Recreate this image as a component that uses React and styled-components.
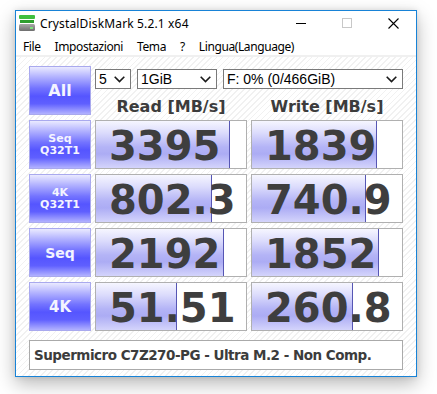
import React from "react";
import styled, { createGlobalStyle } from "styled-components";

const Global = createGlobalStyle`
  html, body { margin: 0; padding: 0; background: #ffffff; }
  body { width: 437px; height: 394px; overflow: hidden; }
`;

const Page = styled.div`
  padding: 10px 0 0 15px;
`;

const Window = styled.div`
  width: 400px;
  height: 365px;
  border: 1px solid #1883d7;
  background: #ffffff;
  box-shadow: 0 7px 18px rgba(0, 0, 0, 0.28), 0 0 6px rgba(0, 0, 0, 0.1);
  display: flex;
  flex-direction: column;
`;

const TitleBar = styled.div`
  height: 24px;
  display: flex;
  align-items: center;
  padding-left: 3px;
  font-family: "Noto Sans", "Open Sans", sans-serif;
  font-size: 12px;
  color: #000;
`;

const TitleText = styled.span`
  margin-left: 5px;
  flex: 1;
  letter-spacing: 0.15px;
`;

const Controls = styled.div`
  display: flex;
  height: 24px;
`;

const CtrlButton = styled.div`
  width: 46px;
  height: 24px;
  display: flex;
  align-items: center;
  justify-content: center;
`;

const MenuBar = styled.div`
  height: 18px;
  padding-top: 2px;
  display: flex;
  align-items: center;
  font-family: "Noto Sans", "Open Sans", sans-serif;
  font-size: 12px;
  color: #000;
  border-bottom: 2px solid #f0f0f0;
`;

const MenuItem = styled.span`
  padding: 0 7px;
  letter-spacing: -0.4px;
`;

const Content = styled.div`
  flex: 1;
  padding: 9px 13px 0 13px;
  background: repeating-linear-gradient(
    135deg,
    #ffffff 0px,
    #ffffff 3px,
    #f1f1f1 3px,
    #f1f1f1 4.2px
  );
`;

const Grid = styled.div`
  display: grid;
  grid-template-columns: 62px 152px 152px;
  grid-auto-rows: 49px;
  column-gap: 4px;
  row-gap: 5px;
`;

const LabelButton = styled.div`
  box-sizing: border-box;
  border: 1px solid #a9a9ee;
  background: linear-gradient(
    to bottom,
    #eaeaff 0%,
    #b0b0ff 22%,
    #7474ff 45%,
    #5555ff 62%,
    #5f5fff 78%,
    #b2b2ff 100%
  );
  display: flex;
  flex-direction: column;
  align-items: center;
  justify-content: center;
  font-family: "DejaVu Sans", Verdana, sans-serif;
  font-weight: bold;
  color: #f4f4ff;
  font-size: ${(p) => p.$size}px;
  line-height: ${(p) => (p.$size > 12 ? 18 : 12)}px;
  text-align: center;
`;

const TopArea = styled.div`
  grid-column: 2 / 4;
  display: flex;
  flex-direction: column;
`;

const SelectRow = styled.div`
  margin-top: 3px;
  display: flex;
  gap: 6px;
`;

const Select = styled.div`
  box-sizing: border-box;
  width: ${(p) => p.$w}px;
  height: 20px;
  border: 1px solid #7a7a7a;
  background: #ffffff;
  display: flex;
  align-items: center;
  padding: 0 5px 0 3px;
  font-family: "Liberation Sans", Arial, sans-serif;
  font-size: 14px;
  color: #000;
`;

const SelectText = styled.span`
  flex: 1;
  white-space: nowrap;
`;

const HeaderRow = styled.div`
  margin-top: 8px;
  display: grid;
  grid-template-columns: 152px 152px;
  column-gap: 4px;
`;

const Header = styled.div`
  text-align: center;
  font-family: "DejaVu Sans", Verdana, sans-serif;
  font-weight: bold;
  font-size: 16px;
  line-height: 19px;
  color: #3c3c3c;
`;

const ValueBox = styled.div`
  box-sizing: border-box;
  border: 1px solid #b0b0b0;
  background:
    linear-gradient(#5656b4, #5656b4) no-repeat,
    linear-gradient(
        to bottom,
        #f6f6ff 0%,
        #dcdcfc 25%,
        #b4b4f6 55%,
        #acacf4 70%,
        #d4d4fb 100%
      )
      no-repeat,
    #ffffff;
  font-family: "DejaVu Sans", Verdana, sans-serif;
  font-weight: bold;
  font-size: 40px;
  color: #3e3e3e;
  padding-left: 13px;
  overflow: hidden;
  white-space: nowrap;
`;

const ValueText = styled.div`
  line-height: 46px;
  margin-top: 2px;
`;

const Comment = styled.div`
  box-sizing: border-box;
  margin-top: 9px;
  height: 30px;
  border: 1px solid #aaaaaa;
  background: #ffffff;
  display: flex;
  align-items: center;
  padding-left: 4px;
  font-family: "DejaVu Sans", Verdana, sans-serif;
  font-weight: bold;
  font-size: 13.5px;
  letter-spacing: -0.5px;
  color: #3c3c3c;
  white-space: nowrap;
`;

const AppIcon = () => (
  <svg width="16" height="17" viewBox="0 0 16 17">
    <defs>
      <linearGradient id="gb" x1="0" y1="0" x2="0" y2="1">
        <stop offset="0" stopColor="#a8a8a8" />
        <stop offset="1" stopColor="#6e6e6e" />
      </linearGradient>
    </defs>
    <rect x="0" y="0" width="16" height="4" rx="1" fill="#3fbf3f" />
    <rect x="1" y="5" width="14" height="3" fill="#2e9e2e" />
    <rect x="0" y="9" width="16" height="7" rx="1.5" fill="url(#gb)" />
    <rect x="11" y="12" width="3" height="2" fill="#7ee07e" />
  </svg>
);

const Chevron = () => (
  <svg width="11" height="7" viewBox="0 0 11 7">
    <path d="M0.7 0.7 L5.5 5.5 L10.3 0.7" fill="none" stroke="#1a1a1a" strokeWidth="1.6" />
  </svg>
);

const rows = [
  { l: ["Seq", "Q32T1"], size: 11, read: "3395", rp: 89, write: "1839", wp: 83.5 },
  { l: ["4K", "Q32T1"], size: 11, read: "802.3", rp: 77, write: "740.9", wp: 76 },
  { l: ["Seq"], size: 14, read: "2192", rp: 85.5, write: "1852", wp: 84.5 },
  { l: ["4K"], size: 15, read: "51.51", rp: 53.5, write: "260.8", wp: 67 },
];

const barStyle = (pct) => ({
  backgroundPosition: `${pct}% 0, 0 0, 0 0`,
  backgroundSize: `1px 100%, ${pct}% 100%, auto`,
});

export default function App() {
  return (
    <>
      <Global />
      <Page>
        <Window>
          <TitleBar>
            <AppIcon />
            <TitleText>CrystalDiskMark 5.2.1 x64</TitleText>
            <Controls>
              <CtrlButton>
                <svg width="10" height="10" viewBox="0 0 10 10">
                  <path d="M0 5.5 H10" stroke="#000" strokeWidth="1" />
                </svg>
              </CtrlButton>
              <CtrlButton>
                <svg width="10" height="10" viewBox="0 0 10 10">
                  <rect x="0.5" y="0.5" width="9" height="9" fill="none" stroke="#c8c8c8" strokeWidth="1" />
                </svg>
              </CtrlButton>
              <CtrlButton>
                <svg width="11" height="11" viewBox="0 0 11 11">
                  <path d="M0.5 0.5 L10.5 10.5 M10.5 0.5 L0.5 10.5" stroke="#000" strokeWidth="1.1" />
                </svg>
              </CtrlButton>
            </Controls>
          </TitleBar>
          <MenuBar>
            <MenuItem>File</MenuItem>
            <MenuItem>Impostazioni</MenuItem>
            <MenuItem>Tema</MenuItem>
            <MenuItem>?</MenuItem>
            <MenuItem>Lingua(Language)</MenuItem>
          </MenuBar>
          <Content>
            <Grid>
              <LabelButton $size={16}>All</LabelButton>
              <TopArea>
                <SelectRow>
                  <Select $w={36}>
                    <SelectText>5</SelectText>
                    <Chevron />
                  </Select>
                  <Select $w={80}>
                    <SelectText>1GiB</SelectText>
                    <Chevron />
                  </Select>
                  <Select $w={180}>
                    <SelectText>F: 0% (0/466GiB)</SelectText>
                    <Chevron />
                  </Select>
                </SelectRow>
                <HeaderRow>
                  <Header>Read [MB/s]</Header>
                  <Header>Write [MB/s]</Header>
                </HeaderRow>
              </TopArea>
              {rows.map((r, i) => (
                <React.Fragment key={i}>
                  <LabelButton $size={r.size}>
                    {r.l.map((t) => (
                      <span key={t}>{t}</span>
                    ))}
                  </LabelButton>
                  <ValueBox style={barStyle(r.rp)}>
                    <ValueText>{r.read}</ValueText>
                  </ValueBox>
                  <ValueBox style={barStyle(r.wp)}>
                    <ValueText>{r.write}</ValueText>
                  </ValueBox>
                </React.Fragment>
              ))}
            </Grid>
            <Comment>Supermicro C7Z270-PG - Ultra M.2 - Non Comp.</Comment>
          </Content>
        </Window>
      </Page>
    </>
  );
}
